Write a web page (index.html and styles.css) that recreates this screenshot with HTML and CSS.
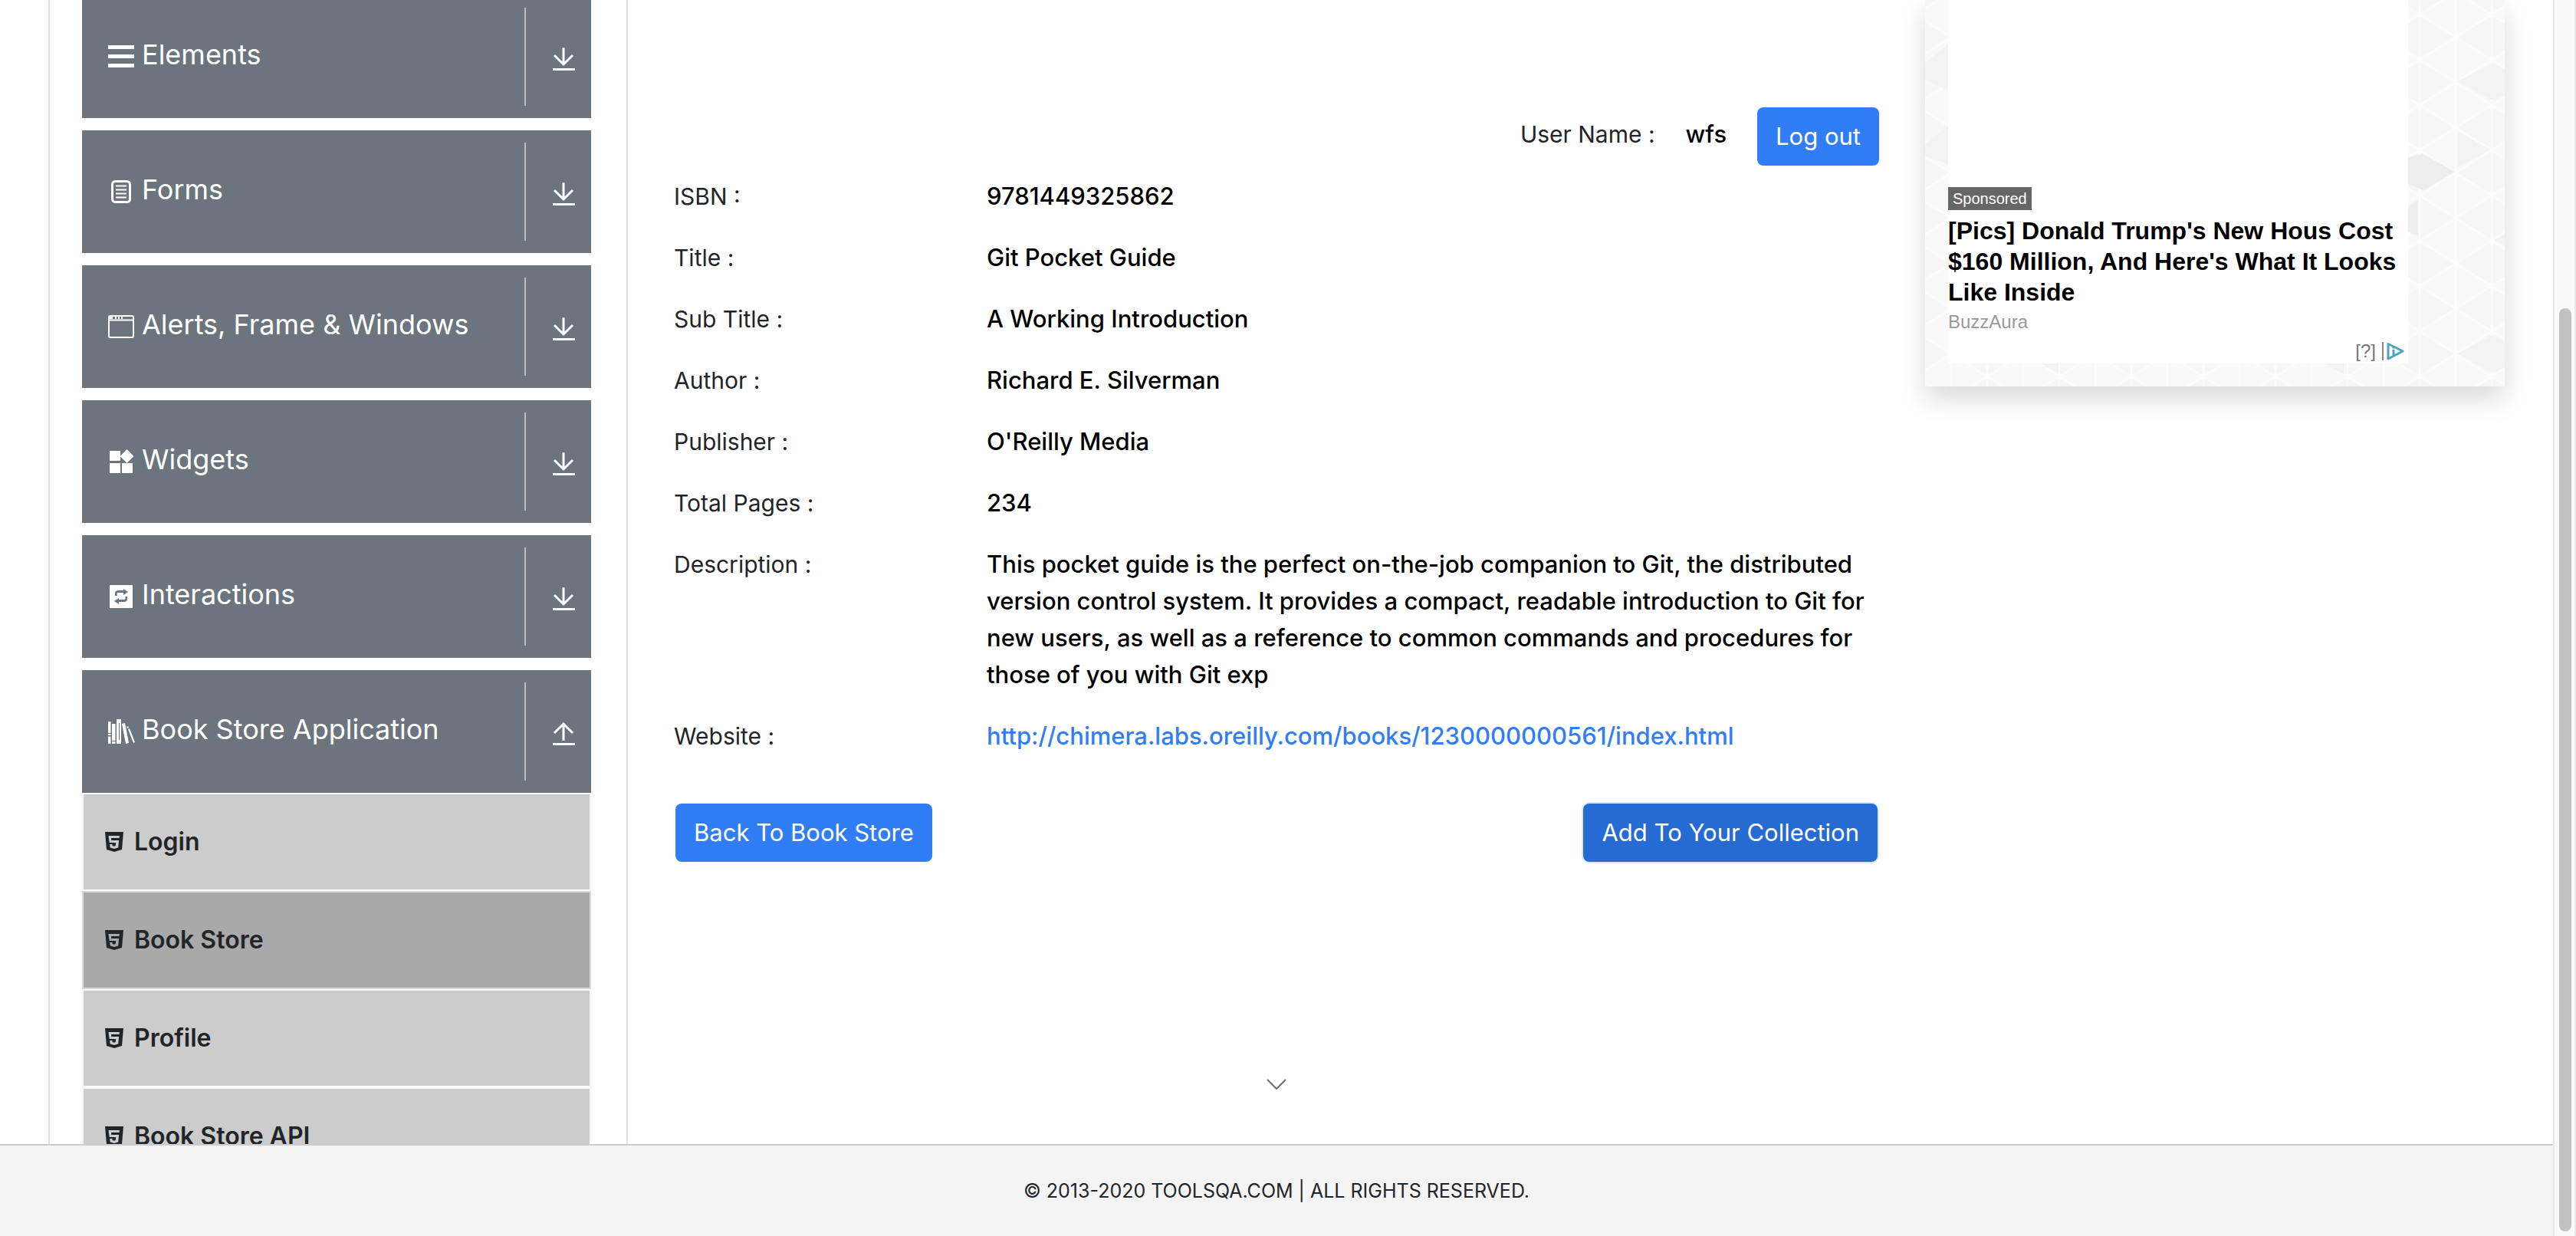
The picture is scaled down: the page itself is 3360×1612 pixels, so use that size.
FILE: index.html
```
<!DOCTYPE html>
<html lang="en">
<head>
<meta charset="utf-8">
<title>Book Store</title>
<link rel="stylesheet" href="styles.css">
</head>
<body>
<svg class="defs" aria-hidden="true">
  <symbol id="i-down" viewBox="0 0 36 36"><path d="M18 3v21M6 13l12 12 12-12M4 31.500h29" fill="none" stroke="currentColor" stroke-width="3"/></symbol>
  <symbol id="i-up" viewBox="0 0 36 36"><path d="M18 27V5M6 17L18 5l12 12M4 31.500h29" fill="none" stroke="currentColor" stroke-width="3"/></symbol>
  <symbol id="i-html5" viewBox="0 0 24 26"><path fill="currentColor" d="M0 0h24l-2 23-10 3-10-3zM4.500 5l1.200 9h8.500l-.4 4-2 .8-2.200-.8-.2-2H6.200l.5 4.500L12 22l5.200-1.500.9-9.500H8.200L8 8h10.500l.4-3z" fill-rule="evenodd"/></symbol>
</svg>
<div class="shell">
  <div class="page">
    <div class="columns">
      <nav class="sidebar">
        <button class="group" type="button">
          <span class="group-name"><svg class="icon" viewBox="0 0 36 36"><path d="M3.500 5.500h29M3.500 17.500h29M3.500 29.500h29" stroke="currentColor" stroke-width="5" stroke-linecap="square"/></svg><span class="group-text">Elements</span></span>
          <span class="group-toggle"><svg class="icon"><use href="#i-down"/></svg></span>
        </button>
        <button class="group" type="button">
          <span class="group-name"><svg class="icon" viewBox="0 0 36 36"><rect x="6.500" y="4.500" width="23" height="27" rx="4" fill="none" stroke="currentColor" stroke-width="3"/><path d="M11 10.500h14M11 15.500h14M11 20.500h14M11 25.500h14" stroke="currentColor" stroke-width="2"/></svg><span class="group-text">Forms</span></span>
          <span class="group-toggle"><svg class="icon"><use href="#i-down"/></svg></span>
        </button>
        <button class="group" type="button">
          <span class="group-name"><svg class="icon" viewBox="0 0 36 36"><rect x="2" y="4" width="32" height="28" rx="2" fill="none" stroke="currentColor" stroke-width="2"/><path d="M2 9.500h32" stroke="currentColor" stroke-width="2"/><path d="M3 6.500h4M10 6.500h2M14 6.500h2M18 6.500h2" stroke="currentColor" stroke-width="3"/></svg><span class="group-text">Alerts, Frame &amp; Windows</span></span>
          <span class="group-toggle"><svg class="icon"><use href="#i-down"/></svg></span>
        </button>
        <button class="group" type="button">
          <span class="group-name"><svg class="icon" viewBox="0 0 36 36"><path fill="currentColor" d="M3 4h14v13H3zM3 20h14v13H3zM19 20h14v13H19zM25.500 2l9 9-9 9-9-9z"/></svg><span class="group-text">Widgets</span></span>
          <span class="group-toggle"><svg class="icon"><use href="#i-down"/></svg></span>
        </button>
        <button class="group" type="button">
          <span class="group-name"><svg class="icon" viewBox="0 0 36 36"><path fill="currentColor" fill-rule="evenodd" d="M3 3h30v30H3zM10 17v-3q0-4 4-4h7V8l6 4-6 4v-3h-7q-1.500 0-1.500 1.500V17zM26 18v3q0 4-4 4h-7v3l-6-4 6-4v2h7q1.500 0 1.500-1.500V18z"/></svg><span class="group-text">Interactions</span></span>
          <span class="group-toggle"><svg class="icon"><use href="#i-down"/></svg></span>
        </button>
        <button class="group" type="button" aria-expanded="true">
          <span class="group-name"><svg class="icon" viewBox="0 0 36 36"><path fill="currentColor" d="M1 5h3.500v15H1zM1 21h3.500v2H1zM1 24.500h3.500V34H1zM6 8h4.500v22H6zM6 31h4.500v3H6zM12 2h6v32h-6zM19 8l4-1 5 26-4 1zM25 12l2-1 1 2-2 1zM27 15l2-1 7 18-2 1z"/><path d="M15.500 7v22" stroke="#6c757d"/></svg><span class="group-text">Book Store Application</span></span>
          <span class="group-toggle"><svg class="icon"><use href="#i-up"/></svg></span>
        </button>
        <ul class="menu">
          <li><a class="menu-item" href="#login"><svg class="shield"><use href="#i-html5"/></svg>Login</a></li>
          <li><a class="menu-item active" href="#books"><svg class="shield"><use href="#i-html5"/></svg>Book Store</a></li>
          <li><a class="menu-item" href="#profile"><svg class="shield"><use href="#i-html5"/></svg>Profile</a></li>
          <li><a class="menu-item" href="#api"><svg class="shield"><use href="#i-html5"/></svg>Book Store API</a></li>
        </ul>
      </nav>

      <main class="content">
        <div class="user-bar">
          <span class="user-label">User Name :</span>
          <span class="user-value">wfs</span>
          <button class="btn" type="button">Log out</button>
        </div>
        <dl class="details">
          <dt>ISBN :</dt><dd>9781449325862</dd>
          <dt>Title :</dt><dd>Git Pocket Guide</dd>
          <dt>Sub Title :</dt><dd>A Working Introduction</dd>
          <dt>Author :</dt><dd>Richard E. Silverman</dd>
          <dt>Publisher :</dt><dd>O'Reilly Media</dd>
          <dt>Total Pages :</dt><dd>234</dd>
          <dt>Description :</dt><dd>This pocket guide is the perfect on-the-job companion to Git, the distributed version control system. It provides a compact, readable introduction to Git for new users, as well as a reference to common commands and procedures for those of you with Git exp</dd>
          <dt>Website :</dt><dd><a class="site-link" href="http://chimera.labs.oreilly.com/books/1230000000561/index.html">http://chimera.labs.oreilly.com/books/1230000000561/index.html</a></dd>
        </dl>
        <div class="actions">
          <button class="btn" type="button">Back To Book Store</button>
          <button class="btn focused" type="button">Add To Your Collection</button>
        </div>
        <svg class="chevron" viewBox="0 0 28 18"><path d="M2 2l12 12L26 2" fill="none" stroke="currentColor" stroke-width="2"/></svg>
      </main>

      <aside class="ad">
        <svg class="ad-pattern" aria-hidden="true">
          <defs>
            <pattern id="mesh" patternUnits="userSpaceOnUse" x="81" y="19" width="94" height="59">
              <rect width="94" height="59" fill="#f9f9f9"/>
              <path d="M0 0L47 29.500 0 59zM94 0v59L47 29.500z" fill="#f7f7f7"/>
              <path d="M0 0v59M94 0v59M47 0v59M0 0l94 59M94 0L0 59" stroke="#fcfcfc" stroke-width="3" fill="none"/>
            </pattern>
          </defs>
          <rect width="100%" height="100%" fill="url(#mesh)"/>
          <g fill="#ededed">
            <path d="M630 205l20-4 41 23-41 24-20-8z"/>
            <path d="M630 270l13-9v46l-13-5z"/>
          </g>
          <g fill="#f3f3f3">
            <path d="M695 106l44-23 17 7v34l-17 6z"/>
            <path d="M695 172l43 23-43 23z"/>
            <path d="M742 313l14-8v15z"/>
            <path d="M695 461l44-23 17 7v34l-17 6z"/>
            <path d="M0 82l30-24v60L0 104z"/>
            <path d="M0 188l30-24v50L0 204z"/>
            <path d="M152 474h22v12z"/>
            <path d="M520 474h26v14z"/>
          </g>
        </svg>
        <div class="ad-card">
          <span class="ad-tag">Sponsored</span>
          <a class="ad-title" href="#ad">[Pics] Donald Trump's New Hous Cost $160 Million, And Here's What It Looks Like Inside</a>
          <span class="ad-source">BuzzAura</span>
          <div class="ad-marks"><span class="ad-help">[?]</span><svg class="ad-choice" viewBox="0 0 24 24"><path d="M2 2.500l19 9.500-19 10z" fill="#fff" stroke="#50a4ba" stroke-width="3" stroke-linejoin="round"/><path d="M9 10v9M9 6v2.500" stroke="#50a4ba" stroke-width="3"/></svg></div>
        </div>
      </aside>
    </div>
    <footer class="footer">© 2013-2020 TOOLSQA.COM | ALL RIGHTS RESERVED.</footer>
  </div>
  <div class="scroll-track" aria-hidden="true"><div class="scroll-thumb"></div></div>
</div>
</body>
</html>
```

FILE: styles.css
```
* { box-sizing: border-box; }

body {
  margin: 0;
  background: #fff;
  color: #212529;
  font: 400 30px/48px Inter, "Liberation Sans", sans-serif;
}

button { font: inherit; color: inherit; border: 0; margin: 0; cursor: pointer; }
.defs { position: absolute; width: 0; height: 0; }

.shell { display: flex; height: 100vh; overflow: hidden; }

.page {
  flex: 1;
  min-width: 0;
  display: flex;
  flex-direction: column;
}

.columns {
  flex: 1;
  min-height: 0;
  overflow: hidden;
  display: grid;
  grid-template-columns: 756fr 1692fr 756fr;
  align-items: start;
  padding: 0 63px;
}

/* Sidebar */
.sidebar {
  border: solid #dee2e6;
  border-width: 0 2px;
  padding: 0 46px 0 42px;
  margin-top: -6px;
}

.group {
  display: flex;
  width: 100%;
  height: 160px;
  padding: 16px 0;
  margin-bottom: 16px;
  background: #6c757d;
  color: #fff;
  text-align: left;
}
.group:last-of-type { margin-bottom: 0; }

.group-name {
  flex: 1;
  display: flex;
  align-items: center;
  gap: 9px;
  padding-left: 33px;
  font-size: 36px;
}
.group-text { padding-bottom: 6px; }
.icon { display: block; flex: none; width: 36px; height: 36px; }

.group-toggle {
  display: flex;
  align-items: center;
  justify-content: flex-end;
  width: 87px;
  padding: 6px 18px 0 0;
  border-left: 2px solid #bfbfbf;
}

.menu { list-style: none; margin: 0; padding: 0; }
.menu-item {
  display: flex;
  align-items: center;
  gap: 14px;
  height: 128px;
  padding-left: 28px;
  border: 2px solid #f8f9fa;
  background: #ccc;
  color: #212529;
  font-size: 32px;
  font-weight: 600;
  text-decoration: none;
}
.menu-item.active { background: #a9a9a9; border-color: #d6dade; }
.shield { display: block; width: 24px; height: 26px; }

/* Book details */
.content {
  display: flex;
  flex-direction: column;
  padding: 140px 60px 0;
}

.user-bar {
  display: flex;
  justify-content: flex-end;
  align-items: center;
  margin-bottom: 16px;
}
.user-label, .user-value { padding-bottom: 6px; }
.user-value {
  margin: 0 40px;
  color: #000;
  font-size: 31px;
  font-weight: 500;
}

.btn {
  height: 76px;
  padding: 0 24px;
  border-radius: 8px;
  background: #307df6;
  color: #fff;
  font-size: 31px;
}
.btn.focused { background: #266bd3; box-shadow: 0 0 0 2px #dbe8fb; }

.details {
  display: grid;
  grid-template-columns: 408fr 1164fr;
  row-gap: 32px;
  margin: 0;
}
.details dd {
  margin: 0;
  color: #000;
  font-size: 31px;
  font-weight: 500;
}
.site-link { color: #307df6; text-decoration: none; }

.actions {
  display: flex;
  justify-content: space-between;
  margin-top: 64px;
  padding: 0 2px;
}

.chevron {
  display: block;
  align-self: center;
  width: 28px;
  height: 18px;
  margin-top: 282px;
  color: #6f6f6f;
}

/* Advertisement */
.ad {
  position: relative;
  height: 504px;
  padding: 0 30px 30px;
  background: #f9f9f9;
  box-shadow: 0 16px 32px rgba(0, 0, 0, .15);
}
.ad-pattern { position: absolute; inset: 0; width: 100%; height: 100%; }
.ad-card {
  position: relative;
  display: flex;
  flex-direction: column;
  align-items: flex-start;
  justify-content: flex-end;
  width: 600px;
  max-width: 100%;
  height: 100%;
  padding-bottom: 4px;
  background: #fff;
  font-family: "Liberation Sans", sans-serif;
}
.ad-tag {
  padding: 0 6px;
  background: #666;
  color: #fff;
  font-size: 20px;
  line-height: 30px;
}
.ad-title {
  margin: 7px 0 5px;
  color: #000;
  font-size: 32px;
  font-weight: 700;
  line-height: 40px;
  text-decoration: none;
}
.ad-source { color: #999; font-size: 24px; line-height: 28px; }
.ad-marks {
  align-self: flex-end;
  display: flex;
  margin-top: 12px;
  padding-right: 4px;
  color: #777;
  font-size: 24px;
  line-height: 24px;
}
.ad-help { padding-right: 8px; margin-right: 4px; border-right: 2px solid #888; }
.ad-choice { display: block; width: 24px; height: 24px; }

.footer {
  flex: none;
  height: 120px;
  padding-top: 35px;
  border-top: 2px solid #ccc;
  background: #f4f4f4;
  font-size: 25px;
  text-align: center;
}

/* Scroll track at the window edge */
.scroll-track {
  display: flex;
  flex-direction: column;
  justify-content: flex-end;
  width: 30px;
  padding: 0 4px 6px 6px;
  background: #fafafa;
  border: solid #e8e8e8;
  border-width: 0 2px;
}
.scroll-thumb { height: 75%; border-radius: 8px; background: #c1c1c1; }
```
